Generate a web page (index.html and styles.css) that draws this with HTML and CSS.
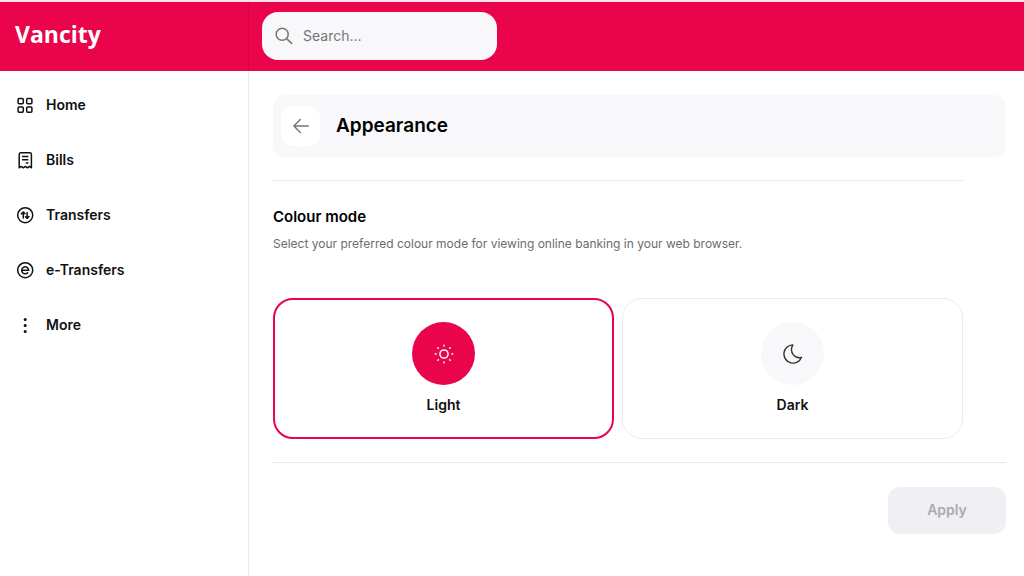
FILE: index.html
```html
<!DOCTYPE html>
<html lang="en">
<head>
<meta charset="utf-8">
<meta name="viewport" content="width=device-width, initial-scale=1">
<title>Appearance - Vancity</title>
<link rel="stylesheet" href="styles.css">
</head>
<body>
<header class="topbar">
  <div class="brand"><a class="logo" href="#">Vancity</a></div>
  <label class="search">
    <svg class="search-icon" viewBox="0 0 18 18" fill="none" stroke="currentColor" stroke-width="1.5" stroke-linecap="round" aria-hidden="true"><circle cx="7.2" cy="7.2" r="6"/><path d="M11.6 11.6 16.6 16.4"/></svg>
    <input class="search-input" type="search" placeholder="Search..." aria-label="Search">
  </label>
</header>
<div class="shell">
  <nav class="sidebar" aria-label="Main">
    <a class="nav-link" href="#">
      <svg class="nav-icon" viewBox="0 0 18 18" fill="none" stroke="currentColor" stroke-width="1.5" aria-hidden="true"><rect x="2.1" y="2.6" width="5.2" height="5.2" rx="1"/><rect x="10.7" y="2.6" width="5.2" height="5.2" rx="1"/><rect x="2.1" y="11" width="5.2" height="5.2" rx="1"/><rect x="10.7" y="11" width="5.2" height="5.2" rx="1"/></svg>
      Home</a>
    <a class="nav-link" href="#">
      <svg class="nav-icon" viewBox="0 0 18 18" fill="none" stroke="currentColor" stroke-width="1.5" stroke-linejoin="round" aria-hidden="true"><path d="M3.2 16.8V3.4a1.6 1.6 0 0 1 1.6-1.6h9a1.6 1.6 0 0 1 1.6 1.6v13.4l-2-1.4-2 1.4-2.1-1.4-2.1 1.4-2-1.4z"/><path d="M6 5.5h6.4M6 8.7h6.4M9.8 12h2.6" stroke-width="1.5"/></svg>
      Bills</a>
    <a class="nav-link" href="#">
      <svg class="nav-icon" viewBox="0 0 18 18" fill="none" stroke="currentColor" stroke-width="1.5" stroke-linecap="round" stroke-linejoin="round" aria-hidden="true"><circle cx="9.2" cy="9.2" r="7.5"/><path d="M7.3 12V6.2M5.4 7.9 7.3 6l1.6 1.6M11.1 6.4v5.8M9.5 10.8l1.6 1.6 1.9-1.9" stroke-width="1.5"/></svg>
      Transfers</a>
    <a class="nav-link" href="#">
      <svg class="nav-icon" viewBox="0 0 18 18" fill="none" stroke="currentColor" stroke-width="1.5" stroke-linecap="round" aria-hidden="true"><circle cx="9.2" cy="9.2" r="7.5"/><path d="M5.9 9.3h6.8a3.5 3.5 0 1 0-1 2.5"/></svg>
      e-Transfers</a>
    <a class="nav-link" href="#">
      <svg class="nav-icon" viewBox="0 0 18 18" fill="currentColor" aria-hidden="true"><circle cx="9.2" cy="3.6" r="1.5"/><circle cx="9.2" cy="9.6" r="1.5"/><circle cx="9.2" cy="15.6" r="1.5"/></svg>
      More</a>
  </nav>
  <main class="main">
    <div class="page-head">
      <button class="back" type="button" aria-label="Back">
        <svg class="back-icon" viewBox="0 0 16 16" fill="none" stroke="currentColor" stroke-width="1.4" stroke-linecap="round" stroke-linejoin="round" aria-hidden="true"><path d="M15.2 8H.9M7.3 1.6.9 8l6.4 6.4"/></svg>
      </button>
      <h1 class="page-title">Appearance</h1>
    </div>
    <form class="form">
      <section class="mode">
        <h2 class="mode-title" id="mode-title">Colour mode</h2>
        <p class="mode-text">Select your preferred colour mode for viewing online banking in your web browser.</p>
        <div class="options" role="radiogroup" aria-labelledby="mode-title">
          <label class="option">
            <input class="option-input" type="radio" name="mode" value="light" checked>
            <span class="option-disc"><svg class="option-icon" viewBox="0 0 20 20" fill="none" stroke="currentColor" stroke-width="1.5" stroke-linecap="round" aria-hidden="true"><circle cx="10" cy="10" r="4.1"/><path d="M10 1.3v.8M10 17.9v.8M1.3 10h.8M17.9 10h.8M3.8 3.8l.5.5M15.7 15.7l.5.5M3.8 16.2l.5-.5M15.7 4.3l.5-.5"/></svg></span>
            <span class="option-name">Light</span>
          </label>
          <label class="option">
            <input class="option-input" type="radio" name="mode" value="dark">
            <span class="option-disc"><svg class="option-icon" viewBox="0 0 20 20" fill="none" stroke="currentColor" stroke-width="1.4" stroke-linejoin="round" aria-hidden="true"><path d="M9.8.9A9.1 9.1 0 1 0 18.5 13.3C12.1 15.2 5.8 8.4 9.8.9z"/></svg></span>
            <span class="option-name">Dark</span>
          </label>
        </div>
      </section>
      <div class="actions"><button class="apply" type="submit" disabled>Apply</button></div>
    </form>
  </main>
</div>
</body>
</html>
```
FILE: styles.css
```css
* { box-sizing: border-box; }
body {
  margin: 0;
  min-height: 100vh;
  display: flex;
  flex-direction: column;
  background: #fff;
  color: #111;
  font-family: Inter, "Liberation Sans", sans-serif;
  font-size: 14px;
  line-height: 20px;
}
h1, h2, p { margin: 0; }
button, input { font: inherit; }
.topbar {
  display: flex;
  align-items: center;
  border-top: 2px solid #fce4ec;
  background: #e9044c;
  height: 71px;
  padding-bottom: 1px;
}
.brand {
  width: 249px;
  align-self: stretch;
  display: flex;
  align-items: center;
  padding: 0 15px 4px;
  border-right: 1px solid #d80447;
}
.logo {
  color: #fff;
  font-family: "Open Sans", "Noto Sans", sans-serif;
  font-size: 23px;
  font-weight: 700;
  line-height: 32px;
  text-decoration: none;
}
.search {
  display: flex;
  align-items: center;
  gap: 10px;
  width: 235px;
  height: 48px;
  margin-left: 13px;
  padding: 0 13px;
  border-radius: 16px;
  background: #f8f8fb;
  color: #757575;
}
.search-icon { width: 18px; height: 18px; flex: none; }
.search-input {
  flex: 1;
  min-width: 0;
  padding: 0;
  border: 0;
  background: none;
  outline: none;
  color: #111;
}
.search-input::placeholder { color: #757575; opacity: 1; }
.shell { flex: 1; display: flex; }
.sidebar {
  width: 249px;
  flex: none;
  display: flex;
  flex-direction: column;
  gap: 35px;
  padding: 24px 16px;
  border-right: 1px solid #ececef;
}
.nav-link {
  display: flex;
  align-items: center;
  gap: 12px;
  color: #111;
  font-weight: 600;
  text-decoration: none;
}
.nav-icon { width: 18px; height: 18px; }
.main { flex: 1; padding: 24px 18px 24px 24px; }
.page-head {
  display: flex;
  align-items: center;
  gap: 16px;
  padding: 11px 8px;
  margin-bottom: 23px;
  border-radius: 12px;
  background: #f8f8fb;
}
.back {
  display: grid;
  place-items: center;
  width: 39px;
  height: 40px;
  padding: 0;
  border: 0;
  border-radius: 12px;
  background: #fff;
  color: #757575;
}
.back-icon { width: 16px; height: 16px; }
.page-title { color: #000; font-size: 19px; line-height: 28px; font-weight: 600; }
.mode {
  margin-right: 43px;
  padding: 24px 0 23px;
  border-top: 1px solid #e8e8ea;
}
.mode-title { color: #000; font-size: 15px; line-height: 24px; font-weight: 600; }
.mode-text { margin-top: 6px; color: #6c6c6c; font-size: 12px; line-height: 18px; font-weight: 400; }
.options { display: grid; grid-template-columns: 1fr 1fr; gap: 8px; margin-top: 45px; }
.option {
  position: relative;
  display: flex;
  flex-direction: column;
  align-items: center;
  gap: 10px;
  padding: 23px 16px;
  border: 1px solid #ececef;
  border-radius: 20px;
}
.option:has(:checked) { border: 2px solid #e9044c; padding: 22px 15px; }
.option-input { position: absolute; inset: 0; margin: 0; opacity: 0; }
.option-disc {
  display: grid;
  place-items: center;
  width: 63px;
  height: 63px;
  border-radius: 50%;
  background: #f8f8fb;
  color: #333;
}
.option-input:checked + .option-disc { background: #e9044c; color: #fff; }
.option-icon { width: 20px; height: 20px; }
.option-name { font-weight: 600; }
.actions {
  display: flex;
  justify-content: flex-end;
  padding-top: 24px;
  border-top: 1px solid #e8e8ea;
}
.apply {
  width: 118px;
  height: 47px;
  padding: 0 0 2px;
  border: 0;
  border-radius: 12px;
  background: #f0eff4;
  color: #acacac;
  font-weight: 600;
}
```
